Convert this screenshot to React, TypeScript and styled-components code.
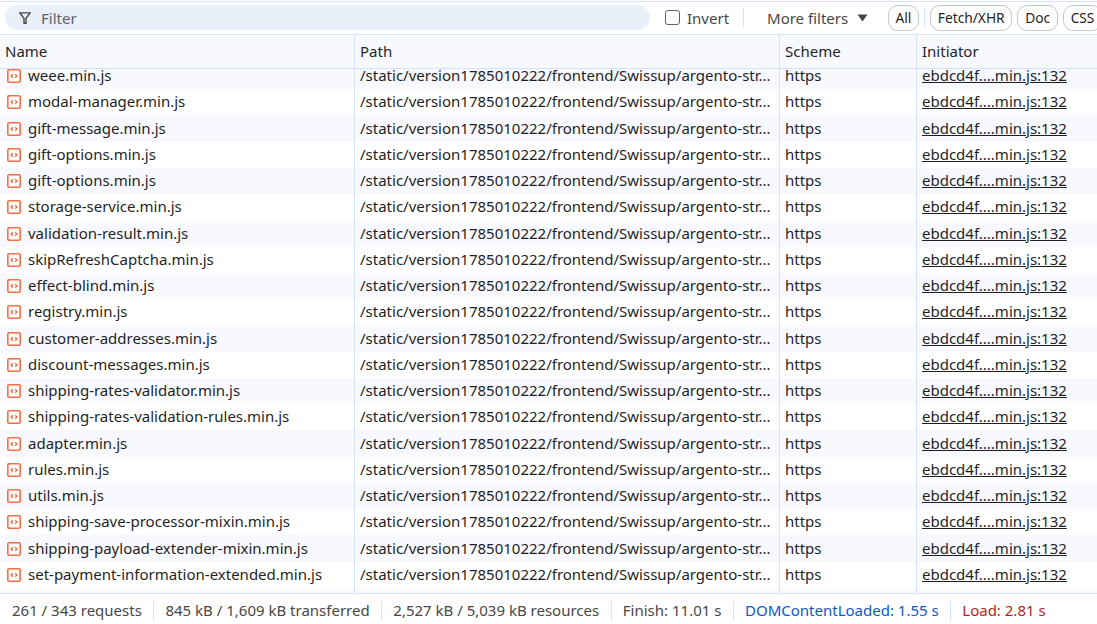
import { createGlobalStyle, styled } from 'styled-components';

const names = [
	'weee.min.js',
	'modal-manager.min.js',
	'gift-message.min.js',
	'gift-options.min.js',
	'gift-options.min.js',
	'storage-service.min.js',
	'validation-result.min.js',
	'skipRefreshCaptcha.min.js',
	'effect-blind.min.js',
	'registry.min.js',
	'customer-addresses.min.js',
	'discount-messages.min.js',
	'shipping-rates-validator.min.js',
	'shipping-rates-validation-rules.min.js',
	'adapter.min.js',
	'rules.min.js',
	'utils.min.js',
	'shipping-save-processor-mixin.min.js',
	'shipping-payload-extender-mixin.min.js',
	'set-payment-information-extended.min.js',
];

const chips = ['Fetch/XHR', 'Doc', 'CSS'];

function ScriptIcon() {
	return (
		<svg width="14" height="14" viewBox="0 0 14 14" fill="none">
			<rect x="0.8" y="0.8" width="12.4" height="12.4" rx="1.2" fill="#fffaf8" stroke="#f2704a" strokeWidth="1.6" />
			<path d="M5.7 5.4 4.2 7l1.5 1.6M8.3 5.4 9.8 7 8.3 8.6" stroke="#e8562a" strokeWidth="1.2" />
		</svg>
	);
}

export default function App() {
	return (
		<Page>
			<GlobalStyle />
			<Toolbar>
				<FilterBox>
					<svg width="12" height="12" viewBox="0 0 12 12" fill="none">
						<path d="M0.8 0.9h10.4L7 6.2v5H5v-5L0.8 0.9Z" stroke="#474747" strokeWidth="1.4" />
					</svg>
					<span>Filter</span>
				</FilterBox>
				<InvertLabel>
					<CheckBox />
					Invert
				</InvertLabel>
				<Divider />
				<MoreFilters>
					More filters
					<svg width="11" height="8" viewBox="0 0 11 8">
						<path d="M0.5 0.5h10L5.5 7.5Z" fill="#474747" />
					</svg>
				</MoreFilters>
				<Chip>All</Chip>
				<ChipDivider />
				{chips.map((chip) => (
					<Chip key={chip}>{chip}</Chip>
				))}
			</Toolbar>
			<Table>
				<Columns>
					<HeadCell>Name</HeadCell>
					<HeadCell>Path</HeadCell>
					<HeadCell>Scheme</HeadCell>
					<HeadCell>Initiator</HeadCell>
				</Columns>
				<Rows>
					<RowList>
						{names.map((name, i) => (
							<Row key={i} $odd={i % 2 === 0}>
								<NameCell>
									<ScriptIcon />
									<span>{name}</span>
								</NameCell>
								<Cell>/static/version1785010222/frontend/Swissup/argento-str...</Cell>
								<Cell>https</Cell>
								<Cell>
									<InitiatorLink>ebdcd4f....min.js:132</InitiatorLink>
								</Cell>
							</Row>
						))}
						<Row $odd={true}>
							<Cell />
							<Cell />
							<Cell />
							<Cell />
						</Row>
					</RowList>
				</Rows>
			</Table>
			<Footer>
				<FooterItem>261 / 343 requests</FooterItem>
				<FooterItem>845 kB / 1,609 kB transferred</FooterItem>
				<FooterItem>2,527 kB / 5,039 kB resources</FooterItem>
				<FooterItem>Finish: 11.01 s</FooterItem>
				<FooterItem $color="#0b57d0">DOMContentLoaded: 1.55 s</FooterItem>
				<FooterItem $color="#b3261e">Load: 2.81 s</FooterItem>
			</Footer>
		</Page>
	);
}

const GlobalStyle = createGlobalStyle`
	html, body {
		margin: 0;
		padding: 0;
		background: #ffffff;
		overflow: hidden;
	}
	* {
		box-sizing: border-box;
	}
`;

const Page = styled.div`
	width: 1097px;
	height: 624px;

	display: flex;
	flex-direction: column;

	padding-top: 1px;

	font-family: 'Noto Sans', sans-serif;
	font-size: 15px;
	color: #1f1f1f;
	overflow: hidden;
`;

const Toolbar = styled.div`
	height: 33px;
	flex: none;

	display: flex;
	align-items: center;

	padding: 0 0 1px 5px;
	border-top: 1px solid #d3e3fd;
	white-space: nowrap;
`;

const FilterBox = styled.div`
	width: 645px;
	height: 25px;
	flex: none;

	display: flex;
	align-items: center;
	gap: 10px;

	padding-left: 14px;
	background-color: #e9f0f9;
	border-radius: 13px;

	color: #5f6368;
`;

const InvertLabel = styled.label`
	display: flex;
	align-items: center;
	gap: 7px;

	margin-left: 15px;
	color: #474747;
`;

const CheckBox = styled.span`
	width: 15px;
	height: 15px;

	border: 1px solid #5f6368;
	border-radius: 3px;
	background-color: #ffffff;
`;

const Divider = styled.span`
	width: 1px;
	height: 20px;
	flex: none;
	margin-left: 14px;
	background-color: #d3e3fd;
`;

const ChipDivider = styled(Divider)`
	margin-left: 0;
	margin-right: 5px;
`;

const MoreFilters = styled.div`
	display: flex;
	align-items: center;
	gap: 9px;

	margin: 0 19.5px 0 23px;
	color: #474747;
`;

const Chip = styled.button`
	height: 26px;
	padding: 0 6.75px;
	margin-right: 5px;
	flex: none;

	background: #ffffff;
	border: 1px solid #c4c7c5;
	border-radius: 10px;

	font: inherit;
	font-size: 13.75px;
	color: #1f1f1f;
`;

const Table = styled.div`
	flex: 1;
	min-height: 0;

	display: flex;
	flex-direction: column;
`;

const Columns = styled.div`
	height: 35px;
	flex: none;

	display: grid;
	grid-template-columns: 355px 425px 137px 1fr;

	background-color: #f8f9ff;
	border-top: 1px solid #d3e3fd;
	border-bottom: 1px solid #d3e3fd;
`;

const HeadCell = styled.div`
	display: flex;
	align-items: center;

	padding: 0 0 2px 5px;
	border-right: 1px solid #d3e3fd;
	color: #1f1f1f;

	&:last-child {
		border-right: 0;
	}
`;

const Rows = styled.div`
	flex: 1;
	min-height: 0;
	overflow: hidden;
`;

const RowList = styled.div`
	margin-top: -6.25px;
`;

const Row = styled.div<{ $odd: boolean }>`
	height: 26.25px;

	display: grid;
	grid-template-columns: 355px 425px 137px 1fr;

	background-color: ${(p) => (p.$odd ? '#f8f9ff' : '#ffffff')};
`;

const Cell = styled.div`
	line-height: 25.9px;

	padding: 0.25px 5px 0;
	border-right: 1px solid #d3e3fd;

	white-space: nowrap;
	color: #1f1f1f;

	&:last-child {
		border-right: 0;
	}
`;

const NameCell = styled(Cell)`
	display: flex;
	align-items: center;
	gap: 7px;
	padding-left: 7px;
`;

const InitiatorLink = styled.span`
	text-decoration: underline;
	color: #1f1f1f;
`;

const Footer = styled.div`
	height: 31px;
	flex: none;

	display: flex;
	align-items: center;

	padding: 4px 0 0 0.7px;
	background-color: #ffffff;
	border-top: 1px solid #d3e3fd;
	white-space: nowrap;
`;

const FooterItem = styled.div<{ $color?: string }>`
	height: 20px;
	line-height: 19px;

	padding: 0 11.3px;
	border-right: 1px solid #d3e3fd;
	color: ${(p) => p.$color ?? '#474747'};

	&:last-child {
		border-right: 0;
	}
`;
